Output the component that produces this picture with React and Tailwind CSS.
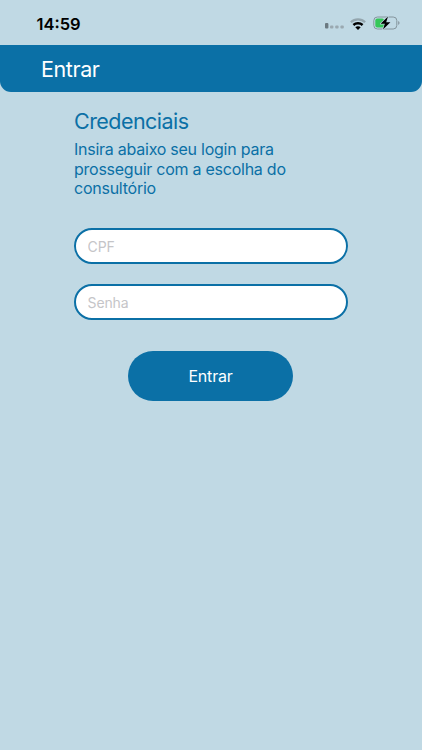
import React from "react";

function SignalIcon() {
  return (
    <svg className="w-[19px] h-[6px]" viewBox="0 0 19 6">
      <rect x="0" y="0" width="3.4" height="5.6" rx="1" fill="#6b7a81" />
      <rect x="5" y="2.4" width="3.4" height="3.2" rx="1" fill="#9aa9b1" />
      <rect x="10.2" y="2.4" width="3.4" height="3.2" rx="1" fill="#9aa9b1" />
      <rect x="15.4" y="2.4" width="3.4" height="3.2" rx="1" fill="#9aa9b1" />
    </svg>
  );
}

function WifiIcon() {
  return (
    <svg className="w-4 h-3" viewBox="0 0 16 12" fill="none">
      <path d="M.9 4.2C4.8.4 11.2.4 15.1 4.2" stroke="#94a6ae" strokeWidth="2.3" />
      <path d="M3.4 7C6 4.6 10 4.6 12.6 7" stroke="#000" strokeWidth="2.4" />
      <path d="M8 12 5.3 9.3C6.8 7.9 9.2 7.9 10.7 9.3Z" fill="#000" />
    </svg>
  );
}

function BatteryIcon() {
  return (
    <svg className="w-[27px] h-[14px]" viewBox="0 0 27 14">
      <rect x=".8" y="1" width="23" height="12" rx="3.6" fill="none" stroke="#84949c" />
      <path d="M25.2 5.1v3.8c1.8-.6 1.8-3.2 0-3.8z" fill="#84949c" />
      <rect x="2.3" y="2.5" width="8.8" height="9" rx="2" fill="#35c759" />
      <path
        d="M15 .5 7.6 7.8h4.2L10 13.6l7.4-7.3h-4.2z"
        fill="#000"
        stroke="#c0d9e4"
        strokeWidth="1.2"
        paintOrder="stroke"
        strokeLinejoin="round"
      />
    </svg>
  );
}

function StatusBar() {
  return (
    <div className="h-[45px] pl-[36.5px] pr-[22px] pt-[12.5px] flex justify-between items-start">
      <span className="text-[16.5px] leading-[22px] font-semibold text-black">14:59</span>
      <div className="flex items-end pt-[3.5px]">
        <span className="pb-[1px] mr-[6px]">
          <SignalIcon />
        </span>
        <span className="pb-[.5px] mr-[7px]">
          <WifiIcon />
        </span>
        <BatteryIcon />
      </div>
    </div>
  );
}

function Field({ type, placeholder }) {
  return (
    <input
      type={type}
      placeholder={placeholder}
      className="block w-full h-9 rounded-full border-2 border-[#0b70a6] bg-white px-[11.5px] text-sm tracking-[-0.1px] outline-none placeholder:text-[#c5c5c8]"
    />
  );
}

export default function App() {
  return (
    <div className="min-h-screen bg-[#c0d9e4] font-[Inter,sans-serif]">
      <StatusBar />
      <header className="h-[47px] pl-[41px] pt-px flex items-center rounded-b-[11px] bg-[#0b70a6]">
        <h1 className="text-[21.5px] tracking-[-0.4px] text-white">Entrar</h1>
      </header>

      <main className="px-[74px] pt-4 text-[#0b70a6]">
        <h2 className="text-[21.5px] leading-[27px] tracking-[-0.55px]">Credenciais</h2>
        <p className="mt-[5px] text-[16px] leading-[19.5px] tracking-[-0.25px]">
          Insira abaixo seu login para
          <br />
          prosseguir com a escolha do
          <br />
          consultório
        </p>
        <form className="mt-[29.5px] flex flex-col gap-5">
          <Field type="text" placeholder="CPF" />
          <Field type="password" placeholder="Senha" />
          <button
            type="button"
            className="mt-[11px] mr-px pb-px w-[165px] h-[50px] self-center rounded-full bg-[#0b70a6] text-white text-[16px] tracking-[-0.2px]"
          >
            Entrar
          </button>
        </form>
      </main>
    </div>
  );
}
